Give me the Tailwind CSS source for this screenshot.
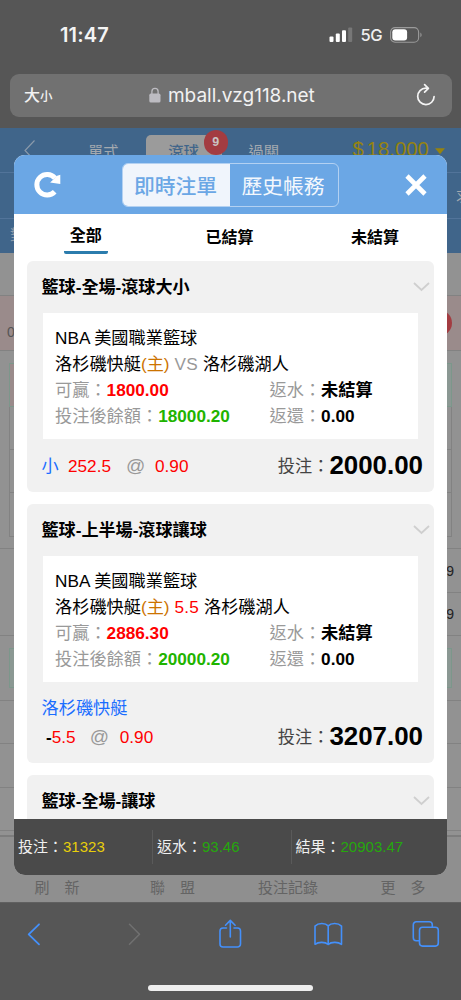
<!DOCTYPE html>
<html lang="zh-Hant">
<head>
<meta charset="utf-8">
<title>即時注單</title>
<script src="https://cdn.jsdelivr.net/npm/@tailwindcss/browser@4"></script>
</head>
<body class="w-[461px] h-[1000px] overflow-hidden bg-[#565656] font-['Liberation_Sans','Noto_Sans_CJK_TC',sans-serif]">
<div class="relative w-[461px] h-[1000px] flex flex-col overflow-hidden">

  <!-- Status bar -->
  <div class="h-[74px] shrink-0 flex items-start pl-[60px] pr-[38px] pt-[22px] font-['Inter','Noto_Sans_CJK_TC',sans-serif] text-white">
    <span class="text-[20px] leading-[26px] font-semibold tracking-[0.15px] text-[#f4f4f4]">11:47</span>
    <div class="ml-auto flex items-center h-[26px]">
      <svg width="24" height="16" viewBox="0 0 24 16"><g fill="#fff"><rect x="0.5" y="9.5" width="4" height="5.5" rx="1"/><rect x="6.8" y="6.5" width="4" height="8.5" rx="1"/><rect x="13" y="3.3" width="4" height="11.7" rx="1"/><rect x="19.2" y="0.5" width="4" height="14.5" rx="1" opacity=".2"/></g></svg>
      <span class="ml-[7px] text-[16.5px] tracking-[-0.5px] font-medium text-[#efefef]">5G</span>
      <svg class="ml-[8px]" width="33" height="16" viewBox="0 0 33 16"><rect x=".6" y=".6" width="28" height="14.6" rx="4.5" fill="none" stroke="#9a9a9a" stroke-width="1.1"/><rect x="2.3" y="2.3" width="14.8" height="11.2" rx="3" fill="#fff"/><path d="M30.4 5.5c1.6.8 1.6 4 0 4.8z" fill="#9a9a9a"/></svg>
    </div>
  </div>

  <!-- Address bar -->
  <div class="h-[54px] shrink-0 px-[9.5px] font-['Inter','Noto_Sans_CJK_TC',sans-serif]">
    <div class="h-[42.5px] rounded-[9px] bg-[#717171] flex items-center pl-[14.5px] pr-[16px] text-[#f2f2f2]">
      <div class="w-[125px] flex items-baseline font-medium leading-none"><span class="text-[16px]">大</span><span class="text-[12.5px]">小</span></div>
      <svg width="12" height="16" viewBox="0 0 12 16"><path d="M2.9 7V4.4a3.1 3.1 0 0 1 6.2 0V7" fill="none" stroke="#bdbcc2" stroke-width="1.3"/><rect x=".3" y="6.6" width="11.2" height="9" rx="1.6" fill="#bdbcc2"/></svg>
      <span class="ml-[7px] pt-[2px] text-[19px] tracking-[-0.02px] whitespace-nowrap">mball.vzg118.net</span>
      <svg class="ml-auto" width="20" height="24" viewBox="0 0 20 24" fill="none" stroke="#f4f4f4" stroke-width="1.7" stroke-linecap="round" stroke-linejoin="round"><path d="M11 5.2H9.8a8.2 8.2 0 1 0 8.3 8.3"/><path d="M8.6 1.6l3.8 3.7-3.8 3.8"/></svg>
    </div>
  </div>

  <!-- Dimmed page -->
  <div class="h-[774px] shrink-0 flex flex-col bg-[#929292] overflow-hidden">
    <div class="h-[45px] shrink-0 bg-[#40658a] border-b border-[#52749a] flex items-start text-[#a3a9af] text-[15.3px]">
      <svg class="ml-[23px] mt-[12px]" width="14" height="22" viewBox="0 0 14 22" fill="none" stroke="#8c9bab" stroke-width="1.1"><path d="M11.5.5L2 10.5l9.5 10"/></svg>
      <span class="ml-[51px] mt-[13px] leading-[22px] w-[58px]">單式</span>
      <div class="relative w-[76px] h-[45px] mt-[7px] rounded-t-[5px] bg-[#9b9b9b] text-center text-[#40658a] font-medium leading-[33px]"><span class="block w-[75px]">滾球</span>
        <span class="absolute left-[57.5px] top-[-5px] w-[24.5px] h-[24.5px] rounded-full bg-[#a33c41] text-[#c9c3c3] text-[12.5px] font-bold leading-[24px]">9</span></div>
      <span class="ml-[26.5px] mt-[13px] leading-[22px] w-[104px]">過關</span>
      <span class="mt-[8px] text-[20.3px] leading-[26px] text-[#96830f] whitespace-nowrap">$<span class="ml-[3px]">18,000</span></span>
      <svg class="ml-[6px] mt-[20px]" width="11" height="7"><path d="M0 .3h10L5 6.300z" fill="#96830f"/></svg>
    </div>
    <div class="h-[46px] shrink-0 bg-[#40658a] border-b border-[#52749a] pl-[456px] pt-[12px] text-[15px] leading-[22px] text-[#a3a9af] whitespace-nowrap">求</div>
    <div class="h-[34px] shrink-0 bg-[#40658a] pl-[10px] pt-[5px] text-[15px] leading-[22px] text-[#8c9bab]">對</div>
    <div class="h-[43px] shrink-0 border-b border-[#828282]"></div>
    <div class="h-[55px] shrink-0 bg-[#9a8b8b] border-b border-[#828282] flex items-center justify-between pl-[7px] pr-[9px]">
      <span class="text-[14px] text-[#555] pt-[18px]">0</span><span class="w-[26px] h-[26px] rounded-full bg-[#a33c41]"></span>
    </div>
    <!-- odds grid -->
    <div class="h-[198px] shrink-0 border-b border-[#828282] pt-[12px] px-[9px]">
      <div class="flex h-[44px] border border-[#7c978b] bg-[#8b9893]"><div class="w-1/2 bg-[#9a8b8b]"></div></div>
      <div class="h-[43px] border-x border-b border-[#828282]"></div>
      <div class="h-[43px] border-x border-b border-[#828282]"></div>
      <div class="h-[44px] border-x border-b border-[#828282]"></div>
    </div>
    <div class="flex shrink-0 h-[87px] border-b border-[#828282] text-[14px] text-[#222]">
      <div class="flex-1"></div>
      <div class="w-[38px] flex flex-col text-right pr-[7px] "><div class="h-[44px] leading-[44px] border-b border-[#828282] -mr-[7px] pr-[7px]">9</div><div class="leading-[42px]">9</div></div>
    </div>
    <div class="h-[65px] shrink-0 border-b border-[#828282] pt-[12px] px-[9px]"><div class="h-[40px] border border-[#7c978b] bg-[#8b9893]"></div></div>
    <div class="h-[43px] shrink-0 border-b border-[#828282]"></div>
    <div class="h-[44px] shrink-0 border-b border-[#828282]"></div>
    <div class="h-[43px] shrink-0 border-b border-[#828282]"></div>
    <div class="flex-1 mt-[4px] border-t-2 border-[#7d7d7d] bg-[#8f8f8f] flex pt-[40px] pl-[34.500px] text-[15px] leading-[22px] text-[#646464] whitespace-nowrap">
      <span class="w-[115.5px]">刷　新</span><span class="w-[108px]">聯　盟</span><span class="w-[122.500px]">投注記錄</span><span>更　多</span>
    </div>
  </div>

  <!-- Safari toolbar -->
  <div class="h-[98px] shrink-0 flex flex-col items-center border-t border-[#606060]">
    <div class="w-full h-[80px] flex pl-[27px] pt-[16px]">
      <svg width="14" height="30" viewBox="0 0 14 30" fill="none" stroke="#4490fa" stroke-width="1.8" stroke-linecap="round" stroke-linejoin="round"><path d="M12 5.300L1.700 15.300 12 25.300"/></svg>
      <svg class="ml-[87px]" width="14" height="30" viewBox="0 0 14 30" fill="none" stroke="#707070" stroke-width="1.6" stroke-linecap="round" stroke-linejoin="round"><path d="M1.500 5.300l10 10-10 10"/></svg>
      <svg class="ml-[77px]" width="24" height="30" viewBox="0 0 24 30" fill="none" stroke="#4490fa" stroke-width="1.6" stroke-linecap="round" stroke-linejoin="round"><path d="M7.500 9H4a3 3 0 0 0-3 3v13a3 3 0 0 0 3 3h14.500a3 3 0 0 0 3-3V12a3 3 0 0 0-3-3H15"/><path d="M11.300 18V1.600M6.500 6.200l4.800-4.800 4.800 4.800"/></svg>
      <svg class="ml-[70px]" width="30" height="30" viewBox="0 0 30 30" fill="none" stroke="#4490fa" stroke-width="1.600" stroke-linejoin="round"><path d="M15.200 6.900C12.500 3.900 5.500 3.600 2 7.100V25.300c3.500-2.600 10.200-2.500 13.200.2 3-2.700 9.800-2.800 13.300-.2V7.100C25 3.600 17.900 3.900 15.200 6.900zV25.500"/></svg>
      <svg class="ml-[69px]" width="28" height="30" viewBox="0 0 28 30" fill="none" stroke="#4490fa" stroke-width="1.600"><rect x="7.500" y="8.300" width="18.800" height="18.800" rx="3"/><path d="M7.500 21.800H4.300a3 3 0 0 1-3-3V5.800a3 3 0 0 1 3-3h13a3 3 0 0 1 3 3v2.500"/></svg>
    </div>
    <div class="w-[165px] h-[6px] shrink-0 mt-[2px] rounded-full bg-[#eeeeee]"></div>
  </div>

  <!-- Bet slip dialog -->
  <div class="absolute left-[14px] top-[155px] w-[433px] h-[720px] rounded-[11px] overflow-hidden bg-white flex flex-col text-[17.2px] leading-[26px] text-black whitespace-nowrap">
    <div class="h-[59px] shrink-0 bg-[#6ba7e5] flex items-center pl-[20px] pr-[20px]">
      <svg width="28" height="28" viewBox="0 0 28 28"><path d="M20.700 20.800A10.300 10.300 0 1 1 20.900 7" fill="none" stroke="#fff" stroke-width="5"/><path d="M26.300 3.800v9.300l-10.200-1.700 3-2.600 3.400-3.700z" fill="#fff"/></svg>
      <div class="ml-[60px] w-[217px] h-[44px] mt-0 rounded-[6px] border border-[#b3d1f2] flex text-[20.800px] leading-[45px] text-center overflow-hidden">
        <div class="w-[107px] bg-[#f0f5fc] text-[#6ba7e5] font-medium pr-[2px]">即時注單</div>
        <div class="flex-1 text-[#f4f8fd] pr-[2px]">歷史帳務</div>
      </div>
      <svg class="ml-auto" width="22" height="22" viewBox="0 0 22 22" stroke="#fff" stroke-width="4.600"><path d="M2 2l18 18M20 2L2 20"/></svg>
    </div>
    <div class="h-[47px] shrink-0 flex justify-between items-start pl-[49.500px] pr-[48px] text-[16px] font-bold">
      <div class="w-[44.500px] h-[39.500px] text-center pt-[9px] border-b-[3.500px] rounded-b-[2px] border-[#2b7cad]">全部</div>
      <div class="pt-[11px]">已結算</div>
      <div class="pt-[11px]">未結算</div>
    </div>
    <div class="flex-1 min-h-0 overflow-hidden px-[13px] flex flex-col gap-[12px]">

      <section class="h-[231px] shrink-0 rounded-[6px] bg-[#f1f1f1] pl-[14.500px] pr-[11px]">
        <div class="h-[52px] flex items-center justify-between -mr-[7px]"><h2 class="font-bold text-[17.100px] pt-[2px]">籃球-全場-滾球大小</h2><svg width="17" height="10" viewBox="0 0 17 10" fill="none" stroke="#cfcfcf" stroke-width="1.800"><path d="M1 1l7.500 7L16 1"/></svg></div>
        <div class="ml-[1.500px] w-[375px] h-[126px] bg-white pl-[12px] pt-[12px]">
          <div>NBA 美國職業籃球</div>
          <div>洛杉磯快艇<span class="text-[#cc7300]">(主)</span> <span class="text-[#999] tracking-[0.4px]">VS</span> 洛杉磯湖人</div>
          <div class="flex"><div class="w-[214.500px] text-[#999]">可贏：<b class="text-[#ff0000]">1800.00</b></div><div class="text-[#999]">返水：<b class="text-black">未結算</b></div></div>
          <div class="flex"><div class="w-[214.500px] text-[#999]">投注後餘額：<b class="text-[#1fb400]">18000.20</b></div><div class="text-[#999]">返還：<b class="text-black">0.00</b></div></div>
        </div>
        <div class="h-[52px] flex items-center text-[#ff0000] pt-px"><span class="text-[#1a6dff] w-[26.500px]">小</span><span class="w-[58px]">252.5</span><span class="text-[#999] text-[19px] w-[29px]">@</span><span>0.90</span>
          <span class="ml-auto text-[#444]">投注：</span><b class="text-[25.900px] text-black -mt-[2px]">2000.00</b></div>
      </section>

      <section class="h-[259px] shrink-0 rounded-[6px] bg-[#f1f1f1] pl-[14.500px] pr-[11px]">
        <div class="h-[52px] flex items-center justify-between -mr-[7px]"><h2 class="font-bold text-[17.100px] pt-[2px]">籃球-上半場-滾球讓球</h2><svg width="17" height="10" viewBox="0 0 17 10" fill="none" stroke="#cfcfcf" stroke-width="1.800"><path d="M1 1l7.500 7L16 1"/></svg></div>
        <div class="ml-[1.500px] w-[375px] h-[126px] bg-white pl-[12px] pt-[12px]">
          <div>NBA 美國職業籃球</div>
          <div>洛杉磯快艇<span class="text-[#cc7300]">(主)</span> <span class="text-[#ff0000] tracking-[0.3px]">5.5</span> 洛杉磯湖人</div>
          <div class="flex"><div class="w-[214.500px] text-[#999]">可贏：<b class="text-[#ff0000]">2886.30</b></div><div class="text-[#999]">返水：<b class="text-black">未結算</b></div></div>
          <div class="flex"><div class="w-[214.500px] text-[#999]">投注後餘額：<b class="text-[#1fb400]">20000.20</b></div><div class="text-[#999]">返還：<b class="text-black">0.00</b></div></div>
        </div>
        <div class="text-[#1a6dff] pt-[13px]">洛杉磯快艇</div>
        <div class="h-[32px] flex items-center text-[#ff0000] pl-[4.500px]"><b class="text-black">-</b><span class="w-[38px]">5.5</span><span class="text-[#999] text-[19px] w-[30px]">@</span><span>0.90</span>
          <span class="ml-auto text-[#444]">投注：</span><b class="text-[25.900px] text-black -mt-[2px]">3207.00</b></div>
      </section>

      <section class="h-[231px] shrink-0 rounded-[6px] bg-[#f1f1f1] pl-[14.500px] pr-[11px]">
        <div class="h-[52px] flex items-center justify-between -mr-[7px]"><h2 class="font-bold text-[17.100px] pt-[2px]">籃球-全場-讓球</h2><svg width="17" height="10" viewBox="0 0 17 10" fill="none" stroke="#cfcfcf" stroke-width="1.800"><path d="M1 1l7.500 7L16 1"/></svg></div>
      </section>
    </div>
    <div class="h-[56px] shrink-0 bg-[#4a4a4a] flex items-center text-[15px] text-[#f0f0f0]">
      <div class="w-[139px] h-[34px] leading-[34px] pl-[4px] border-r border-[#5a5a5a]">投注：<span class="text-[#e8cf0a]">31323</span></div>
      <div class="w-[139px] h-[34px] leading-[34px] pl-[4px] border-r border-[#5a5a5a]">返水：<span class="text-[#25a80c]">93.46</span></div>
      <div class="pl-[3.500px]">結果：<span class="text-[#25a80c]">20903.47</span></div>
    </div>
  </div>
</div>
</body>
</html>
